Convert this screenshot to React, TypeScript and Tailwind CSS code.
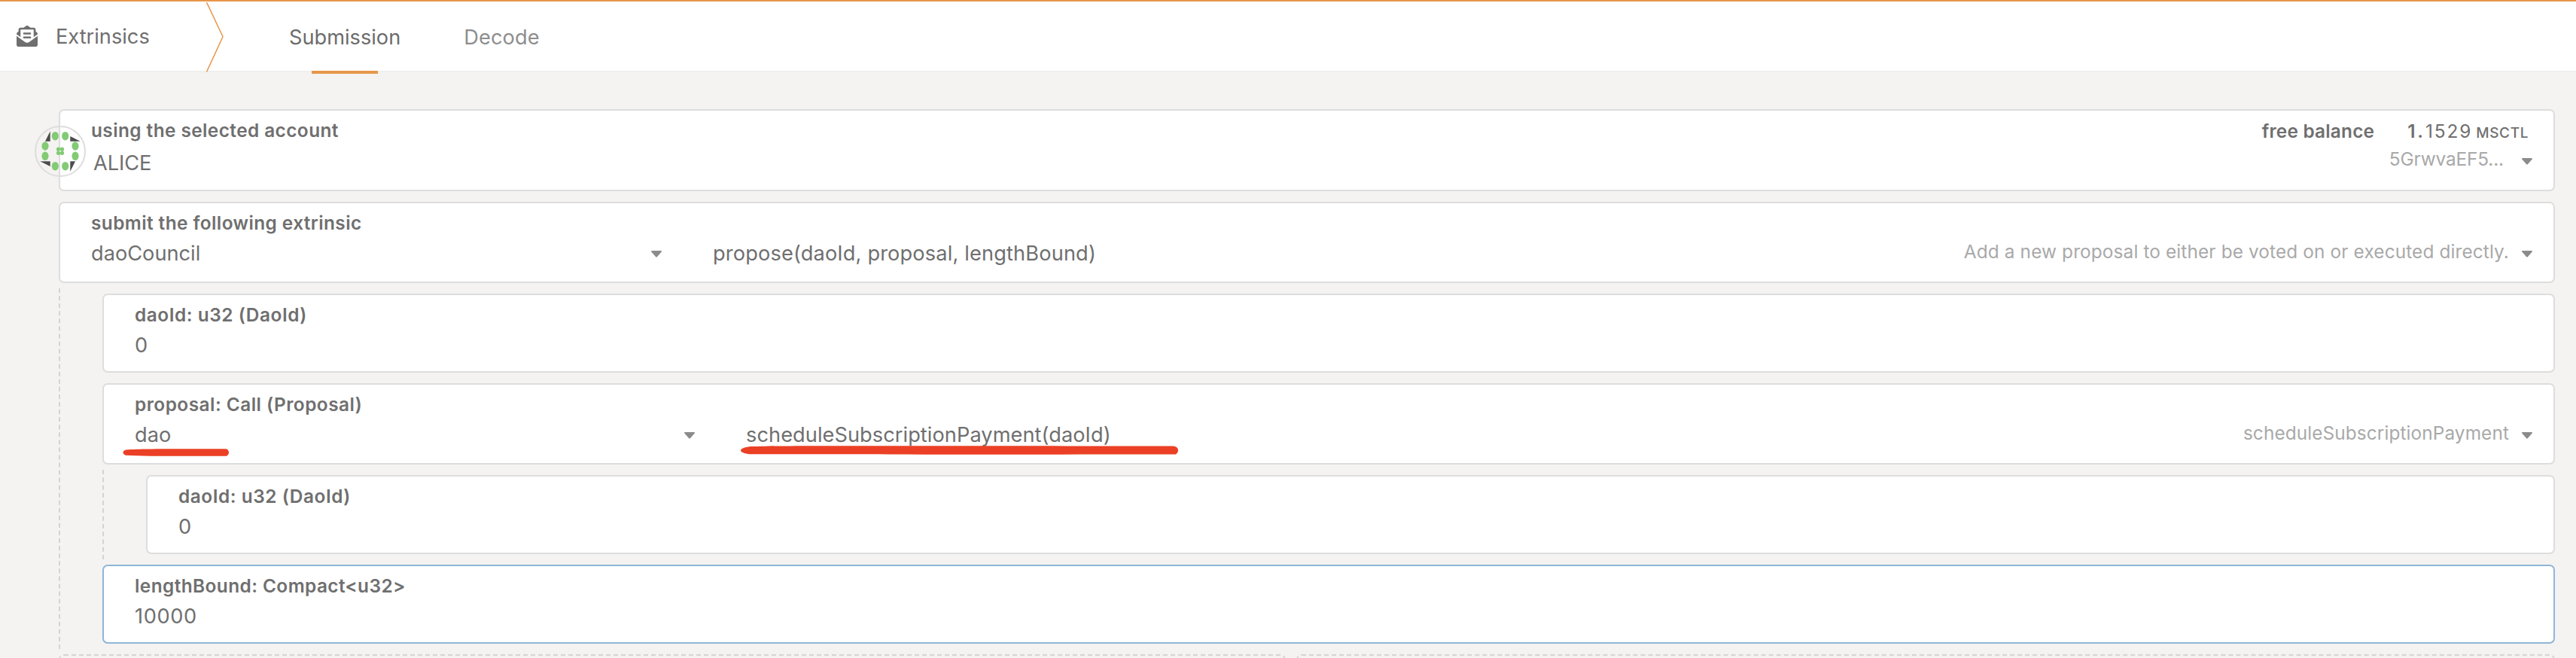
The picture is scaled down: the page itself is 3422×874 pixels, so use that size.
import type { ReactNode } from "react";
import { FaEnvelopeOpenText } from "react-icons/fa";

function Caret({ className = "" }: { className?: string }) {
  return (
    <svg className={`h-[9px] w-[14px] shrink-0 text-[#8b8b8b] ${className}`} viewBox="0 0 14 9" fill="currentColor">
      <path d="M0.9 0H13.1C13.9 0 14.3 1 13.7 1.6L7.8 8.2C7.4 8.7 6.6 8.7 6.2 8.2L0.3 1.6C-0.3 1 0.1 0 0.9 0Z" />
    </svg>
  );
}

function Card({ className = "", children }: { className?: string; children?: ReactNode }) {
  return (
    <div className={`relative my-[7px] rounded-[7px] border-2 bg-white pt-[11px] pl-[41px] ${className}`}>{children}</div>
  );
}

function Label({ className = "tracking-[0.42px]", children }: { className?: string; children: ReactNode }) {
  return <div className={`text-[24.4px] leading-[30px] font-semibold whitespace-nowrap ${className}`}>{children}</div>;
}

function Value({ className = "", children }: { className?: string; children: ReactNode }) {
  return <div className={`text-[27.2px] leading-[33px] whitespace-nowrap ${className}`}>{children}</div>;
}

function Hint({ className = "", children }: { className?: string; children: ReactNode }) {
  return (
    <div className={`flex items-start gap-[17px] pr-7 text-[24.4px] leading-[30px] whitespace-nowrap text-[#a9a9a9] ${className}`}>
      <span>{children}</span>
      <Caret className="mt-[14px]" />
    </div>
  );
}

function Identicon() {
  const dots = [
    [27.3, 13.7], [40.7, 13.7], [14, 27], [54, 27],
    [14, 40.3], [54, 40.3], [27.3, 53.7], [40.7, 53.7],
  ];
  const petals = [
    [31.6, 31.2], [36.4, 31.2], [31.6, 36.2], [36.4, 36.2],
  ];
  return (
    <svg className="absolute top-5 -left-[34px] h-[68px] w-[68px]" viewBox="0 0 68 68">
      <circle cx="34" cy="34" r="33" fill="none" stroke="#dddddd" strokeWidth="2" />
      <path
        fill="#4b4b4b"
        d="M20.7 7.3V20.7H14ZM47.3 14L60.7 20.7H47.3ZM7.3 47.3H20.7V54ZM47.3 47.3H54L47.3 60.7Z"
      />
      {dots.map(([x, y]) => (
        <ellipse key={`${x}-${y}`} cx={x} cy={y} rx="4.6" ry="5.8" fill="#82cb74" />
      ))}
      {petals.map(([x, y]) => (
        <circle key={`${x}-${y}`} cx={x} cy={y} r="2.7" fill="#82cb74" />
      ))}
      <circle cx="34" cy="33.7" r="1.2" fill="#dff0dc" />
    </svg>
  );
}

export default function App() {
  return (
    <div className="h-[874px] w-full overflow-hidden bg-[#f4f3f1] font-['Inter','Liberation_Sans',sans-serif] text-[#6f6f6f]">
      <header className="flex h-24 border-t-2 border-b-2 border-t-[#e6974a] border-b-[#efefee] bg-white">
        <div className="flex w-[274px] shrink-0 pl-[22px]">
          <FaEnvelopeOpenText className="mt-8 h-7 w-7 shrink-0" />
          <Value className="mt-[30px] ml-6">Extrinsics</Value>
        </div>
        <svg className="mt-px h-[93px] w-6 shrink-0" viewBox="0 0 24 93" fill="none" stroke="#e6974a" strokeWidth="1.5">
          <path d="M0.5 0L22 45.7L0.5 92.5" />
        </svg>
        <nav className="ml-[86px] flex gap-[84px]">
          <div className="flex h-24 flex-col items-center">
            <Value className="mt-[31px] text-[#6c6c6c]">Submission</Value>
            <span className="mt-auto h-1 w-[88px] shrink-0 bg-[#e6974a]" />
          </div>
          <Value className="mt-[31px] tracking-[0.12px] text-[#8e8e8e]">Decode</Value>
        </nav>
      </header>

      <main className="mr-7 ml-[78px] pt-[42px]">
        <Card className="flex h-[109px] justify-between border-[#dddddd]">
          <Identicon />
          <div>
            <Label>using the selected account</Label>
            <Value className="mt-3 ml-[3px] tracking-[-0.1px]">ALICE</Value>
          </div>
          <div className="mt-px flex flex-col items-end">
            <div className="flex h-[30px] pr-[33px] text-[24.4px] leading-[30px]">
              <Label className="tracking-[0.2px]">free balance</Label>
              <div className="ml-11 flex items-baseline">
                <span className="font-semibold tracking-[2.8px]">1.</span>
                <span className="tracking-[1.9px]">1529</span>
                <span className="ml-[5px] text-[19px] font-medium tracking-[0.6px]">MSCTL</span>
              </div>
            </div>
            <Hint className="mt-[7px] tracking-[-0.15px]">
              <span className="mr-[7px]">5GrwvaEF5...</span>
            </Hint>
          </div>
        </Card>

        <Card className="mt-[14px] h-[108px] border-[#dddddd]">
          <Label>submit the following extrinsic</Label>
          <div className="mt-2 flex items-start">
            <Value className="mt-px w-[744px]">daoCouncil</Value>
            <Caret className="mt-[14px]" />
            <Value className="mt-px ml-[68px] tracking-[0.15px]">propose(daoId, proposal, lengthBound)</Value>
            <Hint className="ml-auto tracking-[0.12px]">Add a new proposal to either be voted on or executed directly.</Hint>
          </div>
        </Card>

        <div className="flow-root border-l-2 border-dashed border-[#d4d4d2]">
          <div className="ml-14 flow-root">
            <Card className="h-[105px] border-[#dddddd]">
              <Label className="tracking-[0.55px]">daoId: u32 (DaoId)</Label>
              <Value className="mt-[9px]">0</Value>
            </Card>

            <Card className="mt-[14px] h-[108px] border-[#dddddd]">
              <Label className="tracking-[0.48px]">proposal: Call (Proposal)</Label>
              <div className="mt-2 flex items-start">
                <Value className="mt-px w-[730px]">dao</Value>
                <Caret className="mt-[14px]" />
                <Value className="mt-px ml-[68px] tracking-[0.06px]">scheduleSubscriptionPayment(daoId)</Value>
                <Hint className="ml-auto tracking-[0.09px]">scheduleSubscriptionPayment</Hint>
              </div>
              <svg className="absolute top-[85px] left-[25px] h-[11px] w-[142px]" viewBox="0 0 142 11" fill="#eb4025">
                <path d="M4 1.4C30 0 60 0.3 138 0.3C142 3 142 7 138 9.7C90 9.7 40 10.4 4 8.7C-0.7 7 -0.7 3 4 1.4Z" />
              </svg>
              <svg className="absolute top-[81px] left-[845px] h-3 w-[583px]" viewBox="0 0 583 12" fill="#eb4025">
                <path d="M14 1C50 0 150 0.2 575 0.6C583 1 584 8 579 11.4C430 11.4 320 12 200 11.4C130 11 60 11.5 12 11.2C-3 9 -3 3 14 1Z" />
              </svg>
            </Card>

            <div className="flow-root border-l-2 border-dashed border-[#d4d4d2]">
              <Card className="ml-14 h-[105px] border-[#dddddd]">
                <Label className="tracking-[0.55px]">daoId: u32 (DaoId)</Label>
                <Value className="mt-[9px]">0</Value>
              </Card>
            </div>

            <Card className="h-[105px] border-[#8fb5d8]">
              <Label>lengthBound: Compact&lt;u32&gt;</Label>
              <Value className="mt-[9px] tracking-[0.6px]">10000</Value>
            </Card>
          </div>
        </div>

        <div className="mt-[7px] flex gap-[14px]">
          <div className="h-20 w-[1630px] rounded-[7px] border-2 border-dashed border-[#d4d4d2]" />
          <div className="h-20 flex-1 rounded-[7px] border-2 border-dashed border-[#d4d4d2]" />
        </div>
      </main>
    </div>
  );
}
